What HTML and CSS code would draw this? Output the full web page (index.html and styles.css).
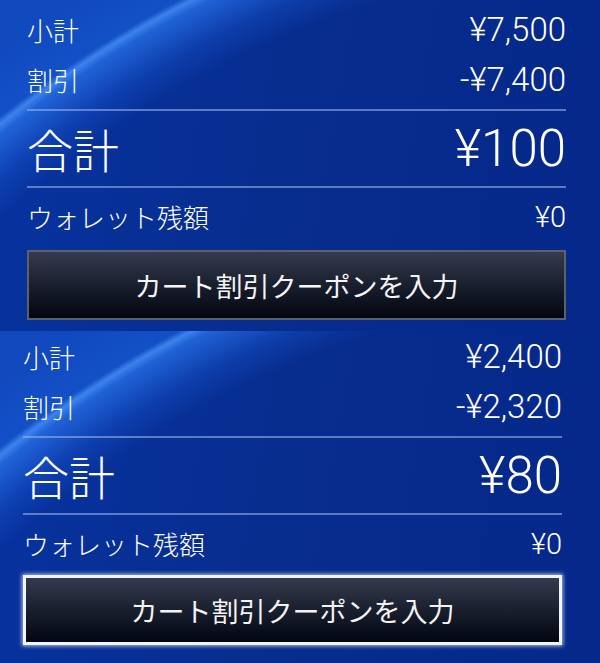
FILE: index.html
```html
<!DOCTYPE html>
<html lang="ja">
<head>
<meta charset="utf-8">
<link rel="stylesheet" href="styles.css">
</head>
<body>
<section class="panel panel-first">
  <div class="row"><span class="label">小計</span><span class="value">¥7,500</span></div>
  <div class="row"><span class="label">割引</span><span class="value">-¥7,400</span></div>
  <div class="sep sep-top"></div>
  <div class="row total"><span class="label">合計</span><span class="value">¥100</span></div>
  <div class="sep"></div>
  <div class="row wallet"><span class="label">ウォレット残額</span><span class="value">¥0</span></div>
  <button class="coupon">カート割引クーポンを入力</button>
</section>
<section class="panel panel-second">
  <div class="row"><span class="label">小計</span><span class="value">¥2,400</span></div>
  <div class="row"><span class="label">割引</span><span class="value">-¥2,320</span></div>
  <div class="sep sep-top"></div>
  <div class="row total"><span class="label">合計</span><span class="value">¥80</span></div>
  <div class="sep"></div>
  <div class="row wallet"><span class="label">ウォレット残額</span><span class="value">¥0</span></div>
  <button class="coupon focused">カート割引クーポンを入力</button>
</section>
</body>
</html>
```
FILE: styles.css
```css
html, body {
  margin: 0;
  padding: 0;
  background: #072c8c;
}
body {
  width: 600px;
  height: 663px;
  overflow: hidden;
  font-family: "Noto Sans CJK JP", "Noto Sans", sans-serif;
  color: #ffffff;
}
.panel {
  box-sizing: border-box;
  height: 331px;
  display: flex;
  flex-direction: column;
  overflow: hidden;
  background:
    radial-gradient(circle at 700px 996px,
      rgba(0,0,0,0) 0,
      rgba(0,0,0,0) 1045px,
      rgba(25,90,215,0.35) 1075px,
      rgba(40,115,235,0.75) 1110px,
      rgba(70,145,250,0.85) 1118px,
      rgba(22,88,210,0.8) 1124px,
      rgba(20,80,200,0.75) 1180px,
      rgba(20,80,200,0.75) 1500px),
    linear-gradient(100deg, #0733a0 0%, #072d8f 45%, #05288a 100%);
}
.panel-first {
  padding: 5px 34px 0 27px;
}
.panel-second {
  height: 332px;
  padding: 1px 38px 0 23px;
}
.row {
  display: flex;
  justify-content: space-between;
  align-items: center;
  height: 50px;
  flex: none;
}
.label {
  font-size: 26px;
  font-weight: 300;
  line-height: 1.2;
}
.value {
  font-family: "Roboto", "Noto Sans", sans-serif;
  font-weight: 300;
  font-size: 33px;
  line-height: 1.2;
}
.sep {
  flex: none;
  height: 2px;
  background: rgba(150, 175, 230, 0.6);
}
.sep-top {
  margin-top: 4px;
}
.total {
  height: 75px;
}
.total .label {
  font-size: 46px;
}
.total .value {
  font-size: 51px;
}
.wallet {
  height: 58px;
}
.wallet .value {
  font-size: 29px;
}
.coupon {
  flex: none;
  margin: 2px 0 0 0;
  height: 70px;
  box-sizing: border-box;
  width: 100%;
  border: 2px solid #5e6068;
  background: linear-gradient(#353b4e 0%, #1a1f2e 50%, #020612 100%);
  color: #f4f4f4;
  font-family: "Noto Sans CJK JP", sans-serif;
  font-size: 27px;
  font-weight: 400;
  padding: 0;
}
.panel-first .coupon {
  margin-top: 4px;
}
.coupon.focused {
  border: 3px solid #f2f4fa;
  box-shadow: 0 0 4px 1px rgba(220, 230, 255, 0.8);
}
```
